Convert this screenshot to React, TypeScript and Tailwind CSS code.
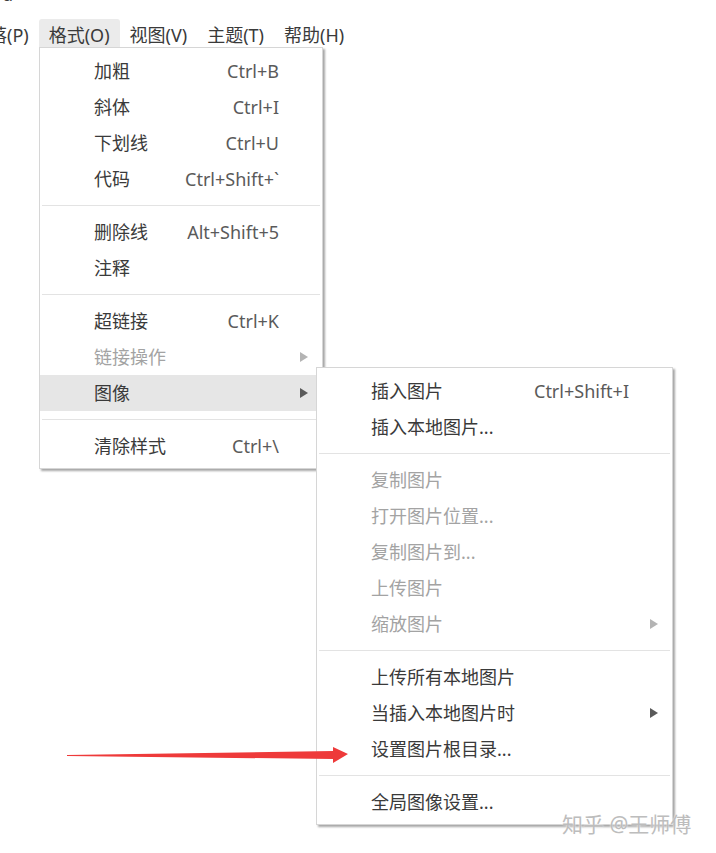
import React from "react";

type Item =
  | { sep: true }
  | { sep?: false; label: string; shortcut?: string; disabled?: boolean; sub?: boolean; active?: boolean };

const formatItems: Item[] = [
  { label: "加粗", shortcut: "Ctrl+B" },
  { label: "斜体", shortcut: "Ctrl+I" },
  { label: "下划线", shortcut: "Ctrl+U" },
  { label: "代码", shortcut: "Ctrl+Shift+`" },
  { sep: true },
  { label: "删除线", shortcut: "Alt+Shift+5" },
  { label: "注释" },
  { sep: true },
  { label: "超链接", shortcut: "Ctrl+K" },
  { label: "链接操作", disabled: true, sub: true },
  { label: "图像", sub: true, active: true },
  { sep: true },
  { label: "清除样式", shortcut: "Ctrl+\\" },
];

const imageItems: Item[] = [
  { label: "插入图片", shortcut: "Ctrl+Shift+I" },
  { label: "插入本地图片..." },
  { sep: true },
  { label: "复制图片", disabled: true },
  { label: "打开图片位置...", disabled: true },
  { label: "复制图片到...", disabled: true },
  { label: "上传图片", disabled: true },
  { label: "缩放图片", disabled: true, sub: true },
  { sep: true },
  { label: "上传所有本地图片" },
  { label: "当插入本地图片时", sub: true },
  { label: "设置图片根目录..." },
  { sep: true },
  { label: "全局图像设置..." },
];

const menuBar = ["落(P)", "格式(O)", "视图(V)", "主题(T)", "帮助(H)"];

const Arrow = ({ disabled }: { disabled?: boolean }) => (
  <svg width="8" height="10" viewBox="0 0 8 10" className="absolute right-[14px] top-[13px]">
    <polygon points="0,0 8,5 0,10" fill={disabled ? "#b4b4b4" : "#5a5a5a"} />
  </svg>
);

const MenuList = ({ items, pr }: { items: Item[]; pr: string }) => (
  <div className="pt-[5px] pb-[4px]">
    {items.map((it, i) =>
      it.sep ? (
        <div key={i} className="h-[17px] flex items-center px-[2px]">
          <div className="h-px w-full bg-[#e3e3e3]" />
        </div>
      ) : (
        <div
          key={i}
          className={`relative flex h-[36px] items-center pl-[54px] ${pr} leading-[36px] ${
            it.active ? "bg-[#e6e6e6]" : ""
          } ${it.disabled ? "text-[#a3a3a3]" : "text-[#3a3a3a]"}`}
        >
          <span className="flex-1 whitespace-nowrap">{it.label}</span>
          {it.shortcut && <span className="whitespace-nowrap text-[#5a5a5a]">{it.shortcut}</span>}
          {it.sub && <Arrow disabled={it.disabled} />}
        </div>
      )
    )}
  </div>
);

export default function App() {
  return (
    <div className="relative w-[716px] h-[853px] overflow-hidden bg-white font-['Noto_Sans','Noto_Sans_CJK_SC',sans-serif] text-[18px] text-[#3a3a3a]">
      {/* cut-off line above */}
      <div className="h-[6px] overflow-hidden pl-[2px]">
        <div className="-mt-[18px] leading-[24px]">d</div>
      </div>

      {/* menu bar */}
      <div className="mt-[13px] flex h-[29px] -ml-[21px]">
        {menuBar.map((m, i) => (
          <div
            key={m}
            className={`px-[10px] pt-[2px] leading-[29px] whitespace-nowrap rounded-t-[3px] ${
              i === 1 ? "bg-[#ebebeb]" : ""
            }`}
          >
            {m}
          </div>
        ))}
      </div>

      {/* 格式 dropdown */}
      <div className="absolute left-[39px] top-[47px] w-[284px] border border-[#d6d6d6] bg-white shadow-[2px_2px_2px_rgba(0,0,0,0.35)]">
        <MenuList items={formatItems} pr="pr-[43px]" />
      </div>

      {/* 图像 submenu */}
      <div className="absolute left-[316px] top-[367px] w-[357px] border border-[#d6d6d6] bg-white shadow-[2px_2px_2px_rgba(0,0,0,0.35)]">
        <MenuList items={imageItems} pr="pr-[43px]" />
      </div>

      {/* red annotation arrow */}
      <svg className="absolute left-[60px] top-[740px]" width="300" height="30" viewBox="0 0 300 30">
        <polygon points="7,15 273,11 273,7 288,14 273,23 273,19 7,16" fill="#ee3a3a" />
      </svg>

      {/* watermark */}
      <div className="absolute left-[562px] top-[809px] text-[21px] leading-[30px] whitespace-nowrap text-[#bdbdbd] [text-shadow:0_0_2px_#ffffff]">
        知乎 @王师傅
      </div>
    </div>
  );
}
